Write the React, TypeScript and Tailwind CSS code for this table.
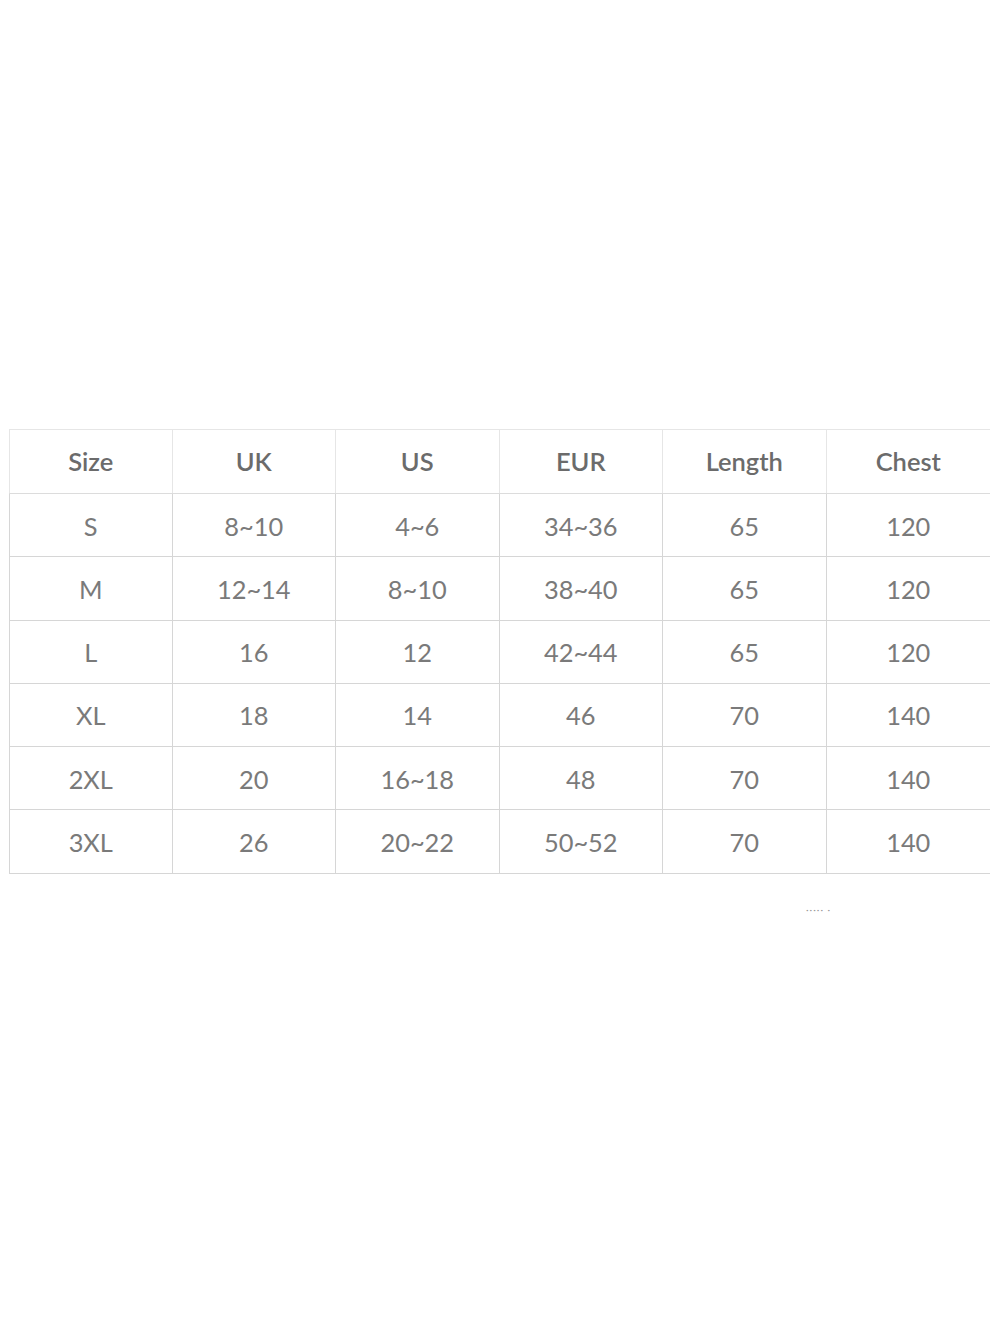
const headers = ["Size", "UK", "US", "EUR", "Length", "Chest"]

const rows = [
  ["S", "8~10", "4~6", "34~36", "65", "120"],
  ["M", "12~14", "8~10", "38~40", "65", "120"],
  ["L", "16", "12", "42~44", "65", "120"],
  ["XL", "18", "14", "46", "70", "140"],
  ["2XL", "20", "16~18", "48", "70", "140"],
  ["3XL", "26", "20~22", "50~52", "70", "140"],
]

export default function App() {
  return (
    <div className="w-[1000px] h-[1327px] bg-white font-['Lato','Liberation_Sans',sans-serif]">
      <div className="pt-[429px] pl-[9px]">
        <div className="w-[981px] border-t border-[#e6e6e6]">
          <div className="grid grid-cols-6 h-[64px] border-b border-[#dcdcdc]">
            {headers.map((h, i) => (
              <div
                key={h}
                className={
                  "flex items-center justify-center text-[25.5px] font-semibold text-[#6b6b6b] " +
                  (i === 0 ? "border-l border-[#dcdcdc] " : "") +
                  (i < 5 ? "border-r border-[#e6e6e6]" : "")
                }
              >
                {h}
              </div>
            ))}
          </div>
          {rows.map((r, ri) => (
            <div key={ri} className="grid grid-cols-6 h-[63.3px] border-b border-[#d6d6d6]">
              {r.map((c, i) => (
                <div
                  key={i}
                  className={
                    "flex items-center justify-center pt-[1px] text-[25.4px] text-[#7a7a7a] " +
                    (i === 0 ? "border-l border-[#d6d6d6] " : "") +
                    (i < 5 ? "border-r border-[#d6d6d6]" : "")
                  }
                >
                  {c}
                </div>
              ))}
            </div>
          ))}
        </div>
        <div className="pl-[797px] pt-[30px] text-[10px] leading-[10px] text-[#999] tracking-[1px]">····· ·</div>
      </div>
    </div>
  )
}
